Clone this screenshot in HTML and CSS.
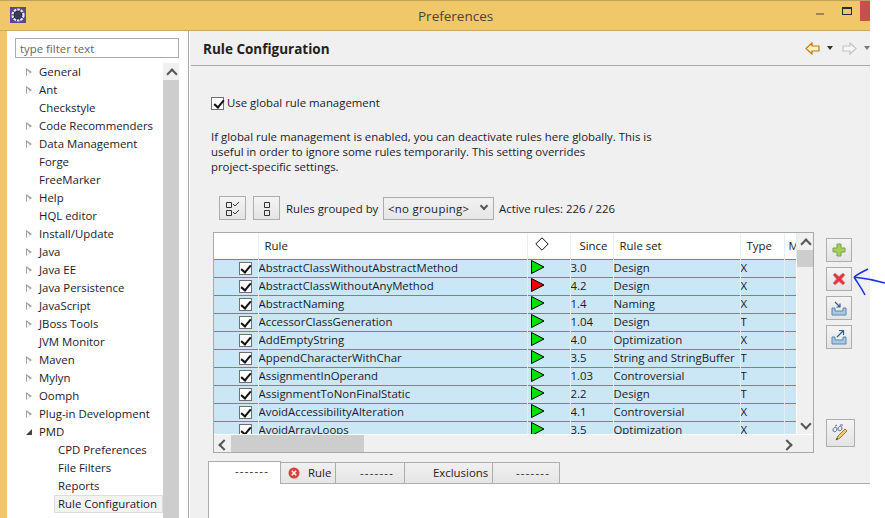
FILE: index.html
```html
<!DOCTYPE html>
<html lang="en">
<head>
  <meta charset="UTF-8" />
  <title>Preferences</title>
  <link rel="stylesheet" href="styles.css">
</head>
<body>
  <svg class="defs" width="0" height="0">
    <symbol id="flag" viewBox="0 0 14 14"><path d="M.5.5 13 7 .5 13.500z" stroke="#000" stroke-width="1"/></symbol>
  </svg>

  <div class="window">
    <header class="titlebar">
      <svg class="app-icon" width="16" height="16" viewBox="0 0 16 16">
        <rect width="16" height="16" fill="#5a4794"/>
        <circle cx="8" cy="8" r="5.500" fill="#2c2a44" stroke="#ececec" stroke-width="2.200" stroke-dasharray="2.500 1"/>
        <circle cx="8" cy="8" r="3.500" fill="#3d3a5c"/>
      </svg>
      <div class="title">Preferences</div>
      <div class="win-min"></div>
      <div class="win-max"></div>
      <div class="win-close"></div>
    </header>

    <div class="main">
      <aside class="sidebar">
        <input class="filter" type="text" placeholder="type filter text">
        <div class="tree-wrap">
          <ul class="tree">
            <li class="closed">General</li>
            <li class="closed">Ant</li>
            <li>Checkstyle</li>
            <li class="closed">Code Recommenders</li>
            <li class="closed">Data Management</li>
            <li>Forge</li>
            <li>FreeMarker</li>
            <li class="closed">Help</li>
            <li>HQL editor</li>
            <li class="closed">Install/Update</li>
            <li class="closed">Java</li>
            <li class="closed">Java EE</li>
            <li class="closed">Java Persistence</li>
            <li class="closed">JavaScript</li>
            <li class="closed">JBoss Tools</li>
            <li>JVM Monitor</li>
            <li class="closed">Maven</li>
            <li class="closed">Mylyn</li>
            <li class="closed">Oomph</li>
            <li class="closed">Plug-in Development</li>
            <li class="open">PMD</li>
            <li class="child">CPD Preferences</li>
            <li class="child">File Filters</li>
            <li class="child">Reports</li>
            <li class="child selected"><span>Rule Configuration</span></li>
            <li>Project Archives</li>
          </ul>
          <div class="vscroll tree-scroll">
            <div class="arrow-up"></div>
          </div>
        </div>
      </aside>

      <section class="pane">
        <div class="pane-head">
          <h2>Rule Configuration</h2>
          <div class="nav">
            <svg width="15" height="13" viewBox="0 0 15 13"><path d="M1 6.500 7 1v3h7v5H7v3z" fill="#fff3c4" stroke="#c07a10" stroke-width="1.200"/></svg>
            <span class="caret"></span>
            <svg class="nav-fwd" width="15" height="13" viewBox="0 0 15 13"><path d="M14 6.500 8 1v3H1v5h7v3z" fill="#f6f6f6" stroke="#c4c4c4" stroke-width="1.200"/></svg>
            <span class="caret light"></span>
          </div>
        </div>

        <div class="pane-body">
          <label class="global"><span class="check"></span>Use global rule management</label>
          <p class="desc">If global rule management is enabled, you can deactivate rules here globally. This is<br>useful in order to ignore some rules temporarily. This setting overrides<br>project-specific settings.</p>

          <div class="toolbar">
            <button class="tool">
              <svg width="16" height="16" viewBox="0 0 16 16" fill="none" stroke="#333"><path d="M1.500 2.500h5v5h-5zM1.500 10.500h5v5h-5z"/><path d="M8 4l2 2 4-4M8 12l2 2 4-4"/></svg>
            </button>
            <button class="tool">
              <svg width="16" height="16" viewBox="0 0 16 16" fill="none" stroke="#333"><path d="M5.500 2.500h5v5h-5zM5.500 10.500h5v5h-5z"/></svg>
            </button>
            <span class="group-label">Rules grouped by</span>
            <div class="select">&lt;no grouping&gt;<span class="chev"></span></div>
            <span>Active rules: 226 / 226</span>
          </div>

          <div class="table-row">
            <div class="frame">
              <div class="frame-top">
                <div class="table-clip">
                  <table class="rules">
                    <colgroup>
                      <col class="c-check"><col class="c-rule"><col class="c-prio"><col class="c-since"><col class="c-set"><col class="c-type"><col class="c-more">
                    </colgroup>
                    <thead>
                      <tr>
                        <th></th>
                        <th class="pad">Rule</th>
                        <th class="diamond"><svg width="14" height="14" viewBox="0 0 14 14"><path d="M7 .8 13.200 7 7 13.200 .8 7z" fill="#fff" stroke="#111"/></svg></th>
                        <th class="pad-since">Since</th>
                        <th class="pad">Rule set</th>
                        <th class="pad">Type</th>
                        <th class="pad-more">M</th>
                      </tr>
                    </thead>
                    <tbody>
                      <tr><td class="cb"><span class="check"></span></td><td>AbstractClassWithoutAbstractMethod</td><td><svg class="flag"><use href="#flag"/></svg></td><td>3.0</td><td>Design</td><td>X</td><td></td></tr>
                      <tr><td class="cb"><span class="check"></span></td><td>AbstractClassWithoutAnyMethod</td><td><svg class="flag red"><use href="#flag"/></svg></td><td>4.2</td><td>Design</td><td>X</td><td></td></tr>
                      <tr><td class="cb"><span class="check"></span></td><td>AbstractNaming</td><td><svg class="flag"><use href="#flag"/></svg></td><td>1.4</td><td>Naming</td><td>X</td><td></td></tr>
                      <tr><td class="cb"><span class="check"></span></td><td>AccessorClassGeneration</td><td><svg class="flag"><use href="#flag"/></svg></td><td>1.04</td><td>Design</td><td>T</td><td></td></tr>
                      <tr><td class="cb"><span class="check"></span></td><td>AddEmptyString</td><td><svg class="flag"><use href="#flag"/></svg></td><td>4.0</td><td>Optimization</td><td>X</td><td></td></tr>
                      <tr><td class="cb"><span class="check"></span></td><td>AppendCharacterWithChar</td><td><svg class="flag"><use href="#flag"/></svg></td><td>3.5</td><td>String and StringBuffer</td><td>T</td><td></td></tr>
                      <tr><td class="cb"><span class="check"></span></td><td>AssignmentInOperand</td><td><svg class="flag"><use href="#flag"/></svg></td><td>1.03</td><td>Controversial</td><td>T</td><td></td></tr>
                      <tr><td class="cb"><span class="check"></span></td><td>AssignmentToNonFinalStatic</td><td><svg class="flag"><use href="#flag"/></svg></td><td>2.2</td><td>Design</td><td>T</td><td></td></tr>
                      <tr><td class="cb"><span class="check"></span></td><td>AvoidAccessibilityAlteration</td><td><svg class="flag"><use href="#flag"/></svg></td><td>4.1</td><td>Controversial</td><td>X</td><td></td></tr>
                      <tr><td class="cb"><span class="check"></span></td><td>AvoidArrayLoops</td><td><svg class="flag"><use href="#flag"/></svg></td><td>3.5</td><td>Optimization</td><td>X</td><td></td></tr>
                    </tbody>
                  </table>
                </div>
                <div class="vscroll table-scroll">
                  <div class="arrow-up"></div>
                  <div class="thumb"></div>
                  <div class="arrow-down"></div>
                </div>
              </div>
              <div class="hscroll">
                <div class="arrow-left"></div>
                <div class="hthumb"></div>
                <div class="arrow-right"></div>
              </div>
            </div>

            <div class="side-buttons">
              <button class="side-btn">
                <svg width="14" height="14" viewBox="0 0 14 14"><path d="M5 1h4v4h4v4H9v4H5V9H1V5h4z" fill="#a5d05a" stroke="#7f9f4a"/></svg>
              </button>
              <button class="side-btn">
                <svg width="14" height="14" viewBox="0 0 14 14"><path d="M3 1l4 3.500L11 1l2 2-3.500 4L13 11l-2 2-4-3.500L3 13l-2-2 3.500-4L1 3z" fill="#e2343c" stroke="#d98a8e" stroke-width=".8"/></svg>
              </button>
              <button class="side-btn">
                <svg width="16" height="16" viewBox="0 0 16 16" fill="none"><path d="M1 8v7h14V8h-3v3H4V8z" fill="#a9c8e4" stroke="#5a86b0"/><path d="M4 2l5 5M9 3.500V7H5.500" stroke="#2f5f90" stroke-width="1.200"/></svg>
              </button>
              <button class="side-btn">
                <svg width="16" height="16" viewBox="0 0 16 16" fill="none"><path d="M1 8v7h14V8h-3v3H4V8z" fill="#a9c8e4" stroke="#5a86b0"/><path d="M6 8l6-6M8 1.500h4.500V6" stroke="#2f5f90" stroke-width="1.200"/></svg>
              </button>
              <button class="side-btn edit">
                <svg width="20" height="20" viewBox="0 0 20 20" fill="none"><path d="M2 7c0-3 4-4 4-1s-4 4-4 1zM7 6c0-3 4-4 4-1s-4 4-4 1zM4 3l2-1M9 2l3 0" stroke="#5a6f96"/><path d="M5 17l2-4 7-7 2 2-7 7z" fill="#eec77a" stroke="#a6793a"/><path d="M5 17l1-2 1 1z" fill="#222"/></svg>
              </button>
            </div>
          </div>

          <div class="tabs-area">
            <div class="tabs">
              <div class="tab active dash">-------</div>
              <div class="tab rule-tab">
                <svg width="12" height="12" viewBox="0 0 12 12"><circle cx="6" cy="6" r="5.500" fill="#d9413f"/><path d="M3.800 3.800l4.400 4.400M8.200 3.800l-4.400 4.400" stroke="#fff" stroke-width="1.500"/></svg>
                Rule
              </div>
              <div class="tab w-dash dash">-------</div>
              <div class="tab w-excl">Exclusions</div>
              <div class="tab w-last dash">-------</div>
            </div>
            <div class="tab-panel"></div>
          </div>
        </div>
      </section>
    </div>
  </div>

  <svg class="scribble" width="34" height="32" viewBox="0 0 34 32" fill="none" stroke="#1a2fe0" stroke-width="1.500">
    <path d="M2 9C6 6 10 4 16 1M2 9c3 5 7 10 11 18M2 9c9 1 20 3 31 6"/>
  </svg>
</body>
</html>
```

FILE: styles.css
```css
* {
  box-sizing: border-box;
}

html, body {
  height: 100%;
}

body {
  margin: 0;
  background: #fff;
  font-family: 'Open Sans', 'Noto Sans', sans-serif;
  font-size: 11.4px;
  color: #1a1a2e;
  overflow: hidden;
  position: relative;
}

.defs {
  position: absolute;
}

.window {
  width: 870px;
  height: 518px;
  display: flex;
  flex-direction: column;
  background: #f0c869;
  padding-left: 7px;
  border-top: 1px solid #c0a25c;
}

.titlebar {
  height: 30px;
  margin-left: -7px;
  flex: none;
  display: flex;
  align-items: flex-start;
  border-bottom: 1px solid #c7a95f;
}

.app-icon {
  margin: 6px 0 0 10px;
}

.title {
  flex: 1;
  padding: 6px 0 0 392px;
  font-size: 13.500px;
  line-height: 19px;
  color: #4a4438;
}

.win-min {
  width: 8px;
  height: 2px;
  background: #a08650;
  margin: 12px 18px 0 0;
}

.win-max {
  width: 10px;
  height: 8px;
  border: 1px solid #2b2b2b;
  border-top-width: 2px;
  margin: 6px 8px 0 0;
}

.win-close {
  width: 10px;
  height: 20px;
  background: #c94f4f;
}

.main {
  flex: 1;
  display: flex;
  min-height: 0;
}

.sidebar {
  width: 182px;
  flex: none;
  background: #fff;
  border-right: 1px solid #a9a9a9;
  padding: 7px 10px 0 8px;
  overflow: hidden;
}

.filter {
  display: block;
  width: 164px;
  height: 20px;
  border: 1px solid #ababab;
  padding: 0 4px;
  font: 11.400px 'Open Sans', sans-serif;
}

.filter::placeholder {
  color: #666;
}

.tree-wrap {
  display: flex;
  margin-top: 5px;
  width: 164px;
}

.tree {
  list-style: none;
  margin: 0;
  padding: 0;
  width: 148px;
  flex: none;
}

.tree li {
  height: 18px;
  line-height: 18px;
  padding-left: 24px;
  white-space: nowrap;
  position: relative;
}

.tree li.closed::before, .tree li.closed::after {
  content: "";
  position: absolute;
  left: 11px;
  top: 5px;
  border-left: 6px solid #a0a0a0;
  border-top: 4.500px solid transparent;
  border-bottom: 4.500px solid transparent;
}

.tree li.closed::after {
  left: 12px;
  top: 6.500px;
  border-left: 3.500px solid #fff;
  border-top: 3px solid transparent;
  border-bottom: 3px solid transparent;
}

.tree li.open::before {
  content: "";
  position: absolute;
  left: 11px;
  top: 6px;
  border-right: 6px solid #444;
  border-top: 6px solid transparent;
}

.tree li.child {
  padding-left: 43px;
}

.tree li.selected {
  padding-left: 39px;
}

.tree li.selected span {
  display: block;
  background: #f3f3f3;
  border: 1px solid #dedede;
  padding-left: 3px;
  line-height: 16px;
  height: 18px;
}

.vscroll {
  background: #f0f0f0;
  display: flex;
  flex-direction: column;
  align-items: center;
  flex: none;
}

.tree-scroll {
  width: 16px;
  height: 500px;
  background: #cdcdcd;
}

.tree-scroll .arrow-up {
  background-color: #f0f0f0;
  width: 100%;
  height: 17px;
}

.arrow-up, .arrow-down, .arrow-left, .arrow-right {
  position: relative;
  flex: none;
}

.arrow-up::after, .arrow-down::after {
  content: "";
  position: absolute;
  left: 5px;
  width: 6px;
  height: 6px;
  border-left: 2px solid #555;
  border-top: 2px solid #555;
  transform: rotate(45deg);
  top: 7px;
}

.arrow-down::after {
  transform: rotate(225deg);
  top: 3px;
}

.arrow-left::after, .arrow-right::after {
  content: "";
  position: absolute;
  top: 6px;
  left: 6px;
  width: 6px;
  height: 6px;
  border-left: 2px solid #555;
  border-top: 2px solid #555;
  transform: rotate(-45deg);
}

.arrow-right::after {
  transform: rotate(135deg);
  left: 3px;
}

.pane {
  flex: 1;
  min-width: 0;
  background: #f0f0f0;
  border-left: 1px solid #fff;
  display: flex;
  flex-direction: column;
}

.pane-head {
  height: 35px;
  flex: none;
  display: flex;
  align-items: center;
  padding: 0 0 0 12px;
  border-bottom: 1px solid #a9a9a9;
  margin-left: 1px;
}

.pane-head h2 {
  flex: 1;
  margin: 0;
  padding-top: 1px;
  font-size: 13.500px;
  font-weight: bold;
  color: #222;
}

.nav {
  display: flex;
  align-items: center;
  gap: 7px;
  width: 65px;
  overflow: hidden;
}

.nav-fwd {
  margin-left: 2px;
}

.caret {
  flex: none;
  border-top: 4px solid #333;
  border-left: 3.500px solid transparent;
  border-right: 3.500px solid transparent;
}

.caret.light {
  border-top-color: #777;
}

.pane-body {
  flex: 1;
  min-height: 0;
  padding: 30px 0 0 21px;
  display: flex;
  flex-direction: column;
  position: relative;
}

.global {
  display: flex;
  align-items: center;
  gap: 3px;
  height: 14px;
  line-height: 14px;
}

.check {
  display: inline-block;
  width: 13px;
  height: 13px;
  flex: none;
  background: #fff;
  border: 1px solid #707070;
  position: relative;
}

.check::after {
  content: "";
  position: absolute;
  left: 3.500px;
  top: 0;
  width: 4px;
  height: 8px;
  border: solid #111;
  border-width: 0 2px 2px 0;
  transform: rotate(40deg);
}

.desc {
  margin: 19px 0 0;
  line-height: 15px;
  color: #1a1a2e;
  white-space: nowrap;
}

.toolbar {
  display: flex;
  align-items: center;
  margin: 22px 0 0 8px;
  height: 24px;
}

.tool {
  width: 27px;
  height: 24px;
  margin: 0 7px 0 0;
  padding: 0;
  border: 1px solid #adadad;
  background: linear-gradient(#f4f4f4, #e4e4e4);
  display: flex;
  align-items: center;
  justify-content: center;
}

.group-label {
  width: 92px;
  margin-left: -1px;
  margin-right: 5px;
  white-space: nowrap;
}

.select {
  width: 111px;
  height: 23px;
  line-height: 21px;
  border: 1px solid #acacac;
  background: linear-gradient(#f2f2f2, #e6e6e6);
  padding-left: 4px;
  margin-right: 5px;
  letter-spacing: .3px;
  position: relative;
}

.chev {
  position: absolute;
  right: 6px;
  top: 5px;
  width: 6px;
  height: 6px;
  border: solid #555;
  border-width: 0 2px 2px 0;
  transform: rotate(45deg);
}

.table-row {
  display: flex;
  margin: 12px 0 0 2px;
  height: 221px;
  flex: none;
}

.frame {
  width: 601px;
  flex: none;
  border: 1px solid #a9a9a9;
  background: #f0f0f0;
  display: flex;
  flex-direction: column;
}

.frame-top {
  display: flex;
  height: 201px;
  flex: none;
}

.table-clip {
  flex: 1;
  min-width: 0;
  overflow: hidden;
  background: #fff;
}

.rules {
  border-collapse: collapse;
  table-layout: fixed;
  width: 582px;
}

.c-check { width: 44px; }
.c-rule { width: 269px; }
.c-prio { width: 43px; }
.c-since { width: 43px; }
.c-set { width: 127px; }
.c-type { width: 44px; }
.c-more { width: 12px; }

.rules th {
  height: 26px;
  padding: 0 0 1px;
  font-weight: normal;
  text-align: left;
  background: #fff;
  color: #222;
  border-right: 1px solid #e4eef8;
  white-space: nowrap;
  overflow: hidden;
}

.rules th.pad {
  padding-left: 6px;
}

.rules th.pad-since {
  padding-left: 9px;
}

.rules th.pad-more {
  padding-left: 4px;
}

.rules th.diamond {
  padding-left: 7px;
  vertical-align: middle;
}

.rules td {
  height: 18px;
  padding: 0 0 1px;
  background: #cbe6f5;
  border-top: 1px solid #26a0da;
  border-right: 1px solid #e0eef6;
  white-space: nowrap;
  overflow: hidden;
  line-height: 16px;
}

.rules td:last-child {
  border-right: 0;
}

.rules td.cb {
  text-align: right;
  padding: 0 6px 0 0;
  line-height: 0;
  vertical-align: middle;
}

.flag {
  display: block;
  width: 14px;
  height: 14px;
  margin: -1px 0 0 3px;
  fill: #00e000;
}

.flag.red {
  fill: #f00000;
}

.table-scroll {
  width: 16px;
}

.table-scroll .arrow-up {
  width: 16px;
  height: 17px;
}

.table-scroll .thumb {
  width: 16px;
  height: 17px;
  background: #cdcdcd;
}

.table-scroll .arrow-down {
  width: 16px;
  height: 17px;
  margin-top: auto;
}

.hscroll {
  height: 18px;
  flex: none;
  display: flex;
  border-top: 1px solid #fff;
}

.arrow-left, .arrow-right {
  width: 17px;
}

.arrow-right {
  margin-left: auto;
  margin-right: 16px;
}

.hthumb {
  width: 133px;
  background: #cdcdcd;
}

.side-buttons {
  display: flex;
  flex-direction: column;
  gap: 5px;
  margin: 6px 0 0 12px;
  align-items: flex-start;
}

.side-btn {
  width: 26px;
  height: 24px;
  padding: 0;
  border: 1px solid #adadad;
  background: linear-gradient(#f4f4f4, #e4e4e4);
  display: flex;
  align-items: center;
  justify-content: center;
}

.side-btn.edit {
  width: 29px;
  height: 28px;
  margin-top: 65px;
}

.tabs-area {
  margin: 8px 0 0 -3px;
  flex: 1;
  min-height: 0;
  display: flex;
  flex-direction: column;
}

.tabs {
  display: flex;
  align-items: flex-end;
  height: 23px;
  flex: none;
  border-bottom: 1px solid #acacac;
  position: relative;
}

.tab {
  height: 21px;
  border: 1px solid #acacac;
  border-bottom: 0;
  border-left-width: 0;
  background: linear-gradient(#f0f0f0, #e5e5e5);
  line-height: 20px;
  color: #222;
  padding-left: 3px;
  text-align: center;
  white-space: nowrap;
}

.dash {
  letter-spacing: 1.200px;
}

.tab.active {
  width: 73px;
  height: 23px;
  margin-bottom: -1px;
  background: #fff;
  border-left-width: 1px;
  padding: 0 0 0 26px;
  text-align: left;
  line-height: 18px;
  position: relative;
}

.tab.rule-tab {
  width: 55px;
  display: flex;
  align-items: center;
  gap: 8px;
  padding-left: 7px;
}

.w-dash { width: 69px; padding-left: 14px; }
.w-excl { width: 88px; padding-left: 28px; text-align: left; }
.w-last { width: 67px; padding-left: 14px; }

.tab-panel {
  flex: 1;
  background: #fff;
  border-left: 1px solid #acacac;
}

.scribble {
  position: absolute;
  left: 852px;
  top: 268px;
}
```
